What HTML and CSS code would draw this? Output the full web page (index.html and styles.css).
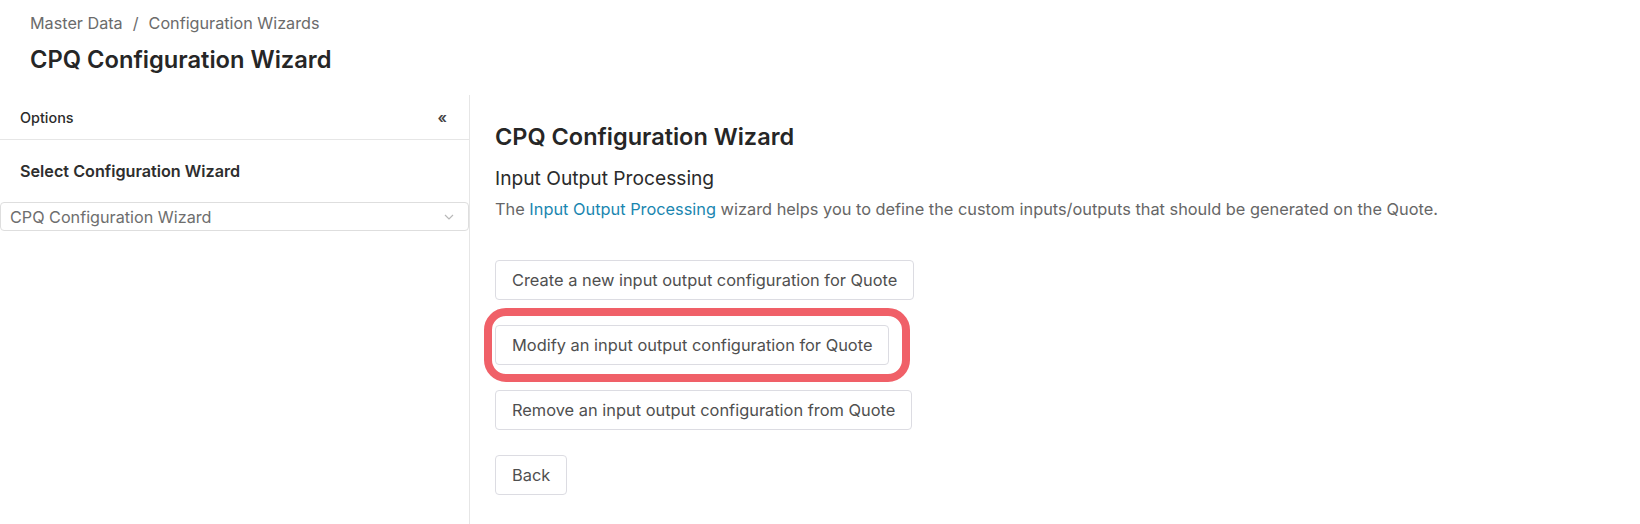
FILE: index.html
```html
<!DOCTYPE html>
<html lang="en">
<head>
<meta charset="utf-8">
<title>CPQ Configuration Wizard</title>
<link rel="stylesheet" href="styles.css">
</head>
<body>
<header class="page-header">
  <nav class="breadcrumb">
    <span class="crumb">Master Data</span>
    <span class="sep">/</span>
    <span class="crumb">Configuration Wizards</span>
  </nav>
  <h1 class="page-title">CPQ Configuration Wizard</h1>
</header>
<div class="layout">
  <aside class="sidebar">
    <div class="sidebar-head">
      <span class="sidebar-label">Options</span>
      <span class="collapse">&laquo;</span>
    </div>
    <div class="sidebar-body">
      <div class="field-label">Select Configuration Wizard</div>
    </div>
    <div class="select">
      <span class="select-value">CPQ Configuration Wizard</span>
      <svg class="chev" width="10" height="6" viewBox="0 0 10 6"><path d="M1 1 L5 5 L9 1" fill="none" stroke="#b8b8b8" stroke-width="1.2"/></svg>
    </div>
  </aside>
  <main class="content">
    <h2 class="wiz-title">CPQ Configuration Wizard</h2>
    <h3 class="wiz-sub">Input Output Processing</h3>
    <p class="wiz-desc">The <a class="link">Input Output Processing</a> wizard helps you to define the custom inputs/outputs that should be generated on the Quote.</p>
    <div class="actions">
      <button class="btn">Create a new input output configuration for Quote</button>
      <div class="highlight-wrap">
        <button class="btn">Modify an input output configuration for Quote</button>
        <span class="ring"></span>
      </div>
      <button class="btn">Remove an input output configuration from Quote</button>
      <button class="btn">Back</button>
    </div>
  </main>
</div>
</body>
</html>
```

FILE: styles.css
```css
* { box-sizing: border-box; }
html, body { margin: 0; padding: 0; background: #fff; }
body {
  font-family: Inter, "Liberation Sans", sans-serif;
  color: #2b2b2b;
  width: 1640px;
  height: 524px;
  overflow: hidden;
}
.page-header { padding: 12px 30px 0 30px; height: 95px; }
.breadcrumb { font-size: 16.2px; color: #6b6b6b; line-height: 22px; display: flex; gap: 10px; }
.page-title { margin: 11px 0 0 0; font-size: 23.7px; font-weight: 600; line-height: 30px; color: #262626; }

.layout { display: flex; height: 429px; }
.sidebar { width: 470px; border-right: 1px solid #e6e6e6; flex: none; }
.sidebar-head {
  height: 45px; border-bottom: 1px solid #e6e6e6;
  display: flex; align-items: center; justify-content: space-between;
  padding: 0 22px 0 20px;
}
.sidebar-label { font-size: 14.4px; font-weight: 500; color: #2b2b2b; }
.collapse { font-size: 15px; font-weight: 600; color: #444; line-height: 1; }
.sidebar-body { padding: 20px 20px 0 20px; }
.field-label { font-size: 16.2px; font-weight: 600; color: #2e2e2e; line-height: 22px; }
.select {
  margin-top: 20px; width: 469px; height: 29px;
  border: 1px solid #dedede; border-radius: 4px;
  display: flex; align-items: center; justify-content: space-between;
  padding: 0 14px 0 9px;
}
.select-value { font-size: 16.2px; color: #6e6e6e; }

.content { padding: 27px 25px 0 25px; flex: 1; }
.wiz-title { margin: 0; font-size: 23.5px; font-weight: 600; line-height: 30px; color: #262626; }
.wiz-sub { margin: 14px 0 0 0; font-size: 19.2px; font-weight: 400; line-height: 24px; color: #2b2b2b; }
.wiz-desc { margin: 8px 0 0 0; font-size: 16.35px; line-height: 22px; color: #666; }
.link { color: #1a86b0; text-decoration: none; }

.actions { margin-top: 40px; display: flex; flex-direction: column; align-items: flex-start; gap: 25px; }
.btn {
  height: 40px; padding: 0 16px; font-family: inherit; font-size: 16.4px; color: #4f4f4f;
  background: #fff; border: 1px solid #dcdce2; border-radius: 4px;
}
.highlight-wrap { position: relative; }
.ring {
  position: absolute; left: -11px; top: -17px; right: -21px; bottom: -17px;
  border: 8px solid #f06068; border-radius: 22px; pointer-events: none;
}
```
